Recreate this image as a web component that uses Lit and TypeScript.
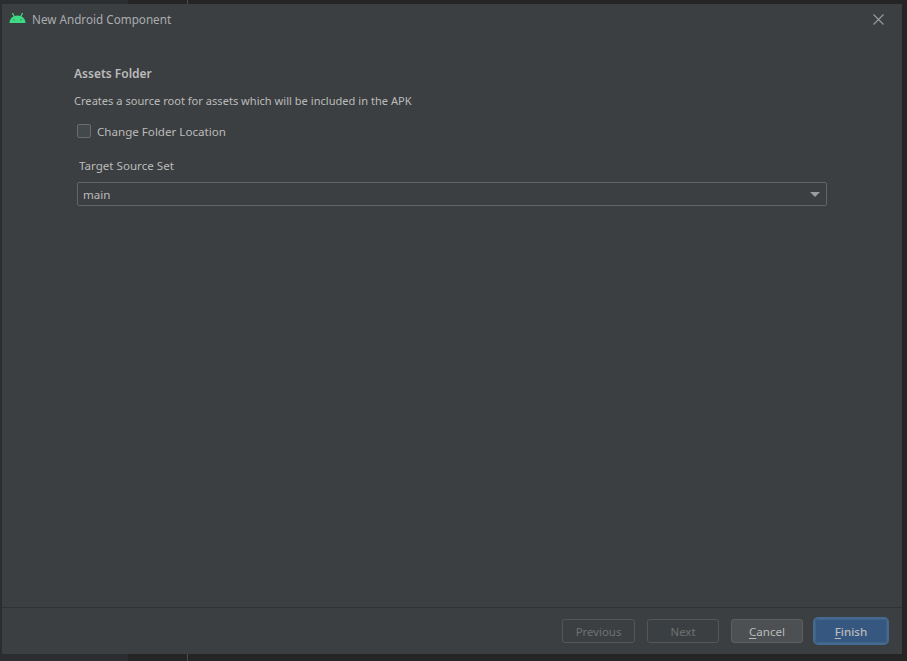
import { LitElement, html, css } from 'lit'
import { customElement } from 'lit/decorators.js'

@customElement('app-root')
export class AppRoot extends LitElement {
  static styles = css`
    :host {
      display: block;
      width: 907px;
      height: 661px;
      box-sizing: border-box;
      padding: 4px 5px 7px 2px;
      background: linear-gradient(
        90deg,
        #2b2d2e 0 128px,
        #252526 128px 187px,
        #4a4a4a 187px 188px,
        #252526 188px
      );
      font-family: 'Noto Sans', 'Open Sans', sans-serif;
      font-size: 11.6px;
      color: #bbbbbb;
    }

    .dialog {
      height: 100%;
      display: flex;
      flex-direction: column;
      background: #3c3f41;
    }

    .titlebar {
      height: 30px;
      flex: none;
      display: flex;
      align-items: center;
      padding: 0 18px 0 7px;
      gap: 6px;
    }

    .logo {
      width: 17px;
      height: 12px;
      flex: none;
    }

    .title {
      flex: 1;
      font-size: 11.7px;
      padding-bottom: 1px;
      color: #a9adb1;
    }

    .close {
      width: 11px;
      height: 11px;
      flex: none;
    }

    .body {
      flex: 1;
      padding: 32px 75px 0 72px;
      display: flex;
      flex-direction: column;
    }

    .heading {
      font-size: 12px;
      font-weight: 600;
      line-height: 16px;
    }

    .desc {
      margin-top: 11px;
      font-size: 11.1px;
      line-height: 16px;
    }

    .check-row {
      margin: 14px 0 0 3px;
      display: flex;
      align-items: center;
      gap: 6px;
      line-height: 18px;
    }

    .box {
      width: 12px;
      height: 12px;
      margin-bottom: 2px;
      border: 1px solid #6b6b6b;
      border-radius: 2px;
      background: #43494a;
      flex: none;
    }

    .label {
      margin: 16px 0 0 5px;
      line-height: 18px;
    }

    .select {
      margin: 7px 0 0 3px;
      height: 24px;
      box-sizing: border-box;
      border: 1px solid #646464;
      border-radius: 2px;
      display: flex;
      align-items: center;
      justify-content: space-between;
      padding: 1px 6px 0 5px;
    }

    .arrow {
      width: 0;
      height: 0;
      border-left: 5px solid transparent;
      border-right: 5px solid transparent;
      border-top: 5px solid #9a9d9f;
    }

    .footer {
      height: 47px;
      flex: none;
      box-sizing: border-box;
      border-top: 1px solid #323232;
      display: flex;
      justify-content: flex-end;
      align-items: center;
      gap: 12px;
      padding: 0 15px 0 0;
    }

    .btn {
      width: 72px;
      height: 24px;
      box-sizing: border-box;
      border: 1px solid #5e6060;
      border-radius: 3px;
      display: flex;
      align-items: center;
      justify-content: center;
      color: #bbbbbb;
    }

    .btn.off {
      font-size: 11.4px;
      color: #6f7173;
      border-color: #54575a;
    }

    .btn.wide {
      width: 73px;
    }

    .btn.cancel {
      background: #4c5052;
    }

    .btn.finish {
      background: #365880;
      border-color: #3f6389;
      outline: 2px solid #456a92;
      color: #bbbbbb;
      font-weight: 500;
    }

    u {
      text-underline-offset: 2px;
    }
  `

  render() {
    return html`
      <div class="dialog">
        <div class="titlebar">
          <svg class="logo" viewBox="0 0 17 12" fill="#3ddc84">
            <path d="M.5 10 C.5 5.5 4 2.5 8.5 2.5 S16.5 5.5 16.5 10 Z" />
            <path d="M3.6 .3 L5.2 3.5 M13.4 .3 L11.8 3.5" stroke="#3ddc84" stroke-width="1.2" stroke-linecap="round" />
            <circle cx="5" cy="6.8" r=".8" fill="#2f9a63" />
            <circle cx="12" cy="6.8" r=".8" fill="#2f9a63" />
          </svg>
          <span class="title">New Android Component</span>
          <svg class="close" viewBox="0 0 11 11" stroke="#9a9d9f" stroke-width="1.1" fill="none">
            <path d="M.5 .5 L10.5 10.5 M10.5 .5 L.5 10.5" />
          </svg>
        </div>
        <div class="body">
          <div class="heading">Assets Folder</div>
          <div class="desc">Creates a source root for assets which will be included in the APK</div>
          <div class="check-row"><span class="box"></span><span>Change Folder Location</span></div>
          <div class="label">Target Source Set</div>
          <div class="select"><span>main</span><span class="arrow"></span></div>
        </div>
        <div class="footer">
          <div class="btn off wide">Previous</div>
          <div class="btn off">Next</div>
          <div class="btn cancel"><span><u>C</u>ancel</span></div>
          <div class="btn finish"><span><u>F</u>inish</span></div>
        </div>
      </div>
    `
  }
}
